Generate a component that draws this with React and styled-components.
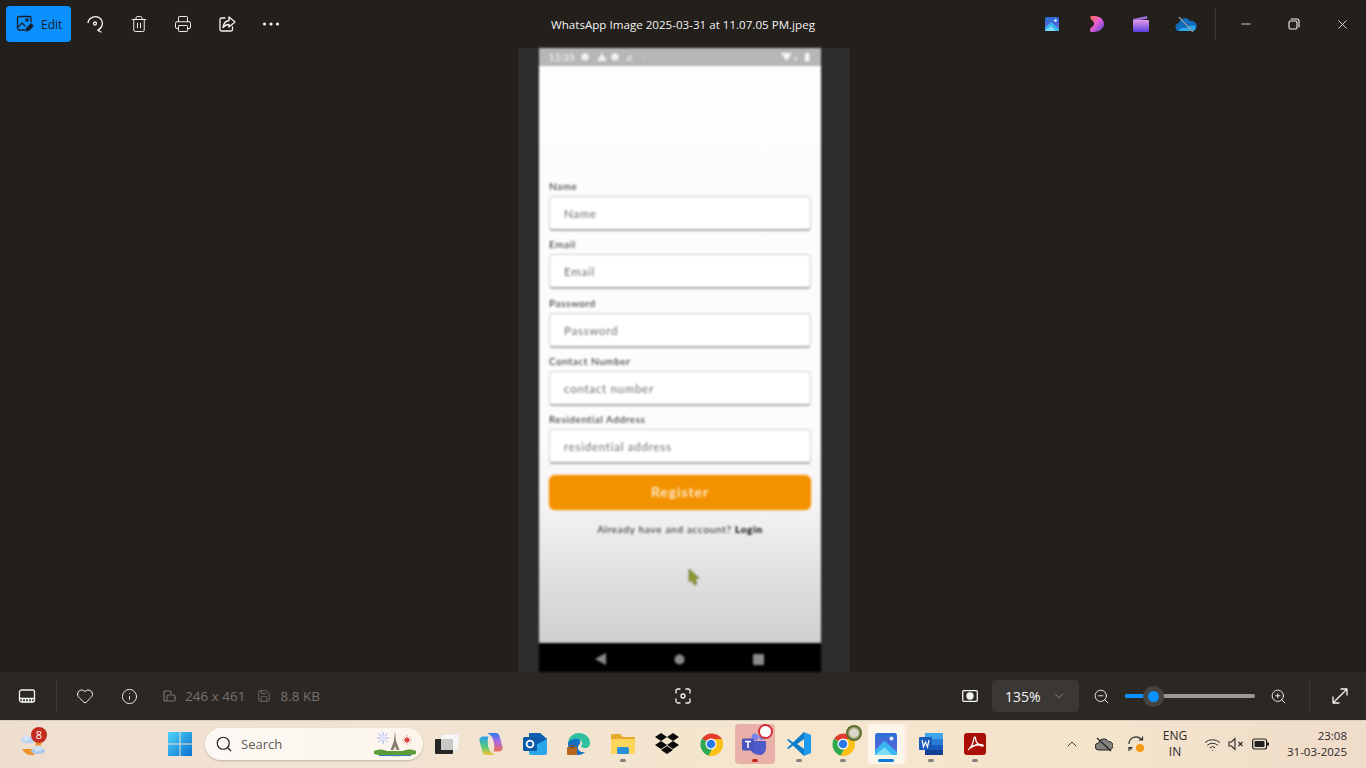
import React from 'react';
import styled, { createGlobalStyle } from 'styled-components';
import { Minus, X, Heart, Info, ZoomIn, ZoomOut, Search, ChevronUp, ChevronDown, Printer, Trash2, Save, Wifi } from 'lucide-react';

const Global = createGlobalStyle`
  html, body { margin: 0; padding: 0; background: #231f1a; }
  body { font-family: "Open Sans", "Noto Sans", sans-serif; overflow: hidden; }
  * { box-sizing: border-box; }
`;

const Page = styled.div`
  width: 1366px;
  height: 768px;
  display: flex;
  flex-direction: column;
  overflow: hidden;
`;

const TopBar = styled.header`
  height: 48px;
  background: #231f1a;
  display: grid;
  grid-template-columns: 1fr auto 1fr;
  align-items: center;
  color: #fff;
`;
const Group = styled.div`
  display: flex;
  align-items: center;
  justify-content: ${p => p.$end ? 'flex-end' : 'flex-start'};
`;
const EditButton = styled.div`
  width: 65px;
  height: 36px;
  border-radius: 4px;
  background: #0a91ff;
  color: #14202c;
  display: flex;
  align-items: center;
  gap: 7px;
  padding-left: 10px;
  font-size: 12px;
  margin: 0 2px 0 6px;
`;
const ToolBtn = styled.div`
  width: ${p => p.$w || 44}px;
  height: 36px;
  margin-left: ${p => p.$ml || 0}px;
  margin-right: ${p => p.$mr || 0}px;
  display: flex;
  align-items: center;
  justify-content: center;
  color: #f4f4f4;
`;
const Title = styled.div`
  font-size: 11.6px;
  color: #f2f2f2;
  white-space: nowrap;
`;
const AppIcon = styled.div`
  width: 44.5px;
  display: flex;
  justify-content: center;
`;
const VRule = styled.div`
  width: 1px;
  height: 32px;
  background: #3b3833;
  margin: ${p => p.$m || '0'};
`;
const WinBtn = styled.div`
  width: 48px;
  height: 32px;
  display: flex;
  align-items: center;
  justify-content: center;
  color: #f6f6f6;
`;

const Stage = styled.main`
  height: 624px;
  background: #231f1a;
  display: flex;
  justify-content: center;
  padding-left: 2px;
`;
const Shot = styled.div`
  width: 332px;
  height: 624px;
  background: #2b2c2e;
  padding-left: 21px;
`;
const Phone = styled.div`
  width: 282px;
  height: 624px;
  display: flex;
  flex-direction: column;
  position: relative;
  filter: blur(0.85px);
  font-family: Lato, "Open Sans", sans-serif;
`;
const StatusBar = styled.div`
  height: 18px;
  background: #b7b5b7;
  color: #f1f1f1;
  display: flex;
  align-items: center;
  padding: 0 10px 0 10px;
  gap: 8px;
  font-size: 9.5px;
  font-weight: 700;
`;
const ClockText = styled.span`
  margin-right: -3px;
  letter-spacing: 0.3px;
`;
const Spacer = styled.div`
  flex: 1;
`;
const Screen = styled.div`
  flex: 1;
  padding: 114px 10px 0;
  background: linear-gradient(180deg, #fefcfe 0%, #fdfbfe 62%, #f5f4f5 76%, #dfdedf 90%, #d0cfd1 100%);
  display: flex;
  flex-direction: column;
`;
const Field = styled.div`
  height: 58.25px;
`;
const Label = styled.div`
  height: 16px;
  line-height: 13px;
  font-size: 10px;
  letter-spacing: 0.6px;
  color: #1e1e20;
`;
const Input = styled.div`
  height: 35px;
  background: #fff;
  border: 1.5px solid #cfced1;
  border-bottom: 2px solid #acabae;
  border-radius: 4px;
  padding-left: 14px;
  line-height: 34px;
  font-size: 11.5px;
  letter-spacing: 0.75px;
  color: #6f6e72;
`;
const RegisterBtn = styled.div`
  margin-top: 4px;
  height: 35px;
  border-radius: 6px;
  background: #f39200;
  color: #fde9c6;
  font-size: 14px;
  font-weight: 700;
  letter-spacing: 0.9px;
  text-align: center;
  line-height: 33px;
  box-shadow: 0 0 2px #f8c77a;
`;
const LoginLine = styled.div`
  margin-top: 13px;
  text-align: center;
  font-size: 10px;
  letter-spacing: 0.7px;
  color: #252528;
  b { color: #0c0c10; font-weight: 900; }
`;
const Pointer = styled.svg`
  position: absolute;
  left: 149px;
  top: 521px;
`;
const NavBar = styled.div`
  height: 29px;
  background: #000;
  display: flex;
  align-items: center;
  justify-content: center;
  gap: 68px;
  padding: 3px 1px 0 0;
`;

const BottomBar = styled.div`
  height: 48px;
  background: #2b2824;
  display: grid;
  grid-template-columns: 1fr auto 1fr;
  align-items: center;
  color: #f4f4f4;
`;
const Meta = styled.div`
  display: flex;
  align-items: center;
  gap: 9px;
  color: #76736e;
  font-size: 13.5px;
  margin-left: ${p => p.$ml || 0}px;
`;
const ZoomBox = styled.div`
  width: 87px;
  height: 32px;
  background: #3a3734;
  border-radius: 4px;
  display: flex;
  align-items: center;
  justify-content: space-between;
  padding: 0 13px 0 13px;
  font-size: 14px;
  color: #f4f4f4;
`;
const Track = styled.div`
  width: 130px;
  height: 4px;
  border-radius: 2px;
  background: #9a9894;
  position: relative;
`;
const Fill = styled.div`
  height: 4px;
  width: 28px;
  border-radius: 2px;
  background: #0a91ff;
`;
const Thumb = styled.div`
  position: absolute;
  left: 17.5px;
  top: -8.5px;
  width: 21px;
  height: 21px;
  border-radius: 50%;
  background: #0a91ff;
  border: 5px solid #45423f;
`;

const Taskbar = styled.footer`
  height: 48px;
  background: linear-gradient(90deg, #efdfd0 0%, #f2e3d2 30%, #f5e6cd 60%, #f5e4cc 80%, #efdcc9 100%);
  box-shadow: inset 0 1px 0 #d8cec1;
  display: flex;
  align-items: center;
`;
const Weather = styled.div`
  width: 158px;
  height: 47px;
  padding-left: 20px;
  display: flex;
  align-items: center;
  position: relative;
`;
const Badge = styled.div`
  position: absolute;
  left: 31px;
  top: 6px;
  width: 16px;
  height: 16px;
  border-radius: 50%;
  background: #c42b1c;
  color: #fff;
  font-size: 11px;
  text-align: center;
  line-height: 16px;
`;
const Tile = styled.div`
  width: ${p => p.$w || 44}px;
  height: 40px;
  margin-left: ${p => p.$ml || 0}px;
  margin-right: ${p => p.$mr || 0}px;
  display: flex;
  align-items: center;
  justify-content: center;
  position: relative;
  border-radius: 4px;
  background: ${p => p.$bg || 'transparent'};
`;
const Dot = styled.div`
  position: absolute;
  bottom: 2px;
  left: 50%;
  width: ${p => p.$w || 6}px;
  height: 3px;
  border-radius: 2px;
  transform: translateX(-50%);
  background: ${p => p.$c || '#85827d'};
`;
const SearchBox = styled.div`
  width: 218px;
  height: 32px;
  margin-left: 3px;
  margin-right: 2px;
  border-radius: 16px;
  background: linear-gradient(90deg, #fdf8f3, #fbf5ec);
  box-shadow: 0 1px 2px #bdb2a4;
  display: flex;
  align-items: center;
  padding: 0 7px 0 10px;
  gap: 8px;
  font-size: 13px;
  color: #5d5a56;
`;
const Tray = styled.div`
  margin-left: auto;
  display: flex;
  align-items: center;
  color: #2a2a2a;
  padding-right: 19px;
`;
const TrayIcon = styled.div`
  width: ${p => p.$w || 32}px;
  display: flex;
  justify-content: center;
`;
const Lang = styled.div`
  width: 46px;
  text-align: center;
  font-size: 12px;
  line-height: 16px;
  color: #2a2a2a;
  margin-right: 4px;
`;
const Clock = styled.div`
  margin-left: 13px;
  text-align: right;
  font-size: 11.5px;
  line-height: 16px;
  color: #2a2a2a;
`;
const RecDot = styled.div`
  position: absolute;
  top: 0;
  right: 2px;
  width: 15px;
  height: 15px;
  border-radius: 50%;
  background: #fff;
  border: 2px solid #d6303c;
`;
const ProfileDot = styled.div`
  position: absolute;
  top: 1px;
  right: 3px;
  width: 16px;
  height: 16px;
  border-radius: 50%;
  background: radial-gradient(circle at 50% 50%, #d8d6c8 0 35%, #5c6a28 60%);
`;

const s = { fill: 'none', stroke: 'currentColor', strokeWidth: 1.3, strokeLinecap: 'round', strokeLinejoin: 'round' };

const EditIcon = () => (
  <svg width="18" height="18" viewBox="0 0 18 18" {...s}>
    <path d="M9 15H3a1.500 1.500 0 0 1-1.500-1.500V3A1.500 1.500 0 0 1 3 1.500h10.500A1.500 1.500 0 0 1 15 3v4" />
    <path d="M2 12l4-4 3 3" /><circle cx="11" cy="5" r="1.200" />
    <path d="M10 16l1-3 4-4 2 2-4 4z" fill="currentColor" />
  </svg>
);
const RotateIcon = () => (
  <svg width="18" height="18" viewBox="0 0 18 18" {...s}>
    <path d="M2 7.500A7.500 7.500 0 0 1 15.500 5c2 3.500.5 8-3.500 10" /><path d="M15 12.500L12 15.500l3 1.500" />
    <circle cx="9" cy="8.500" r="1.500" />
  </svg>
);
const ShareIcon = () => (
  <svg width="18" height="18" viewBox="0 0 18 18" {...s}>
    <path d="M7 3H3.500A1.500 1.500 0 0 0 2 4.500v10A1.500 1.500 0 0 0 3.500 16h9.500a1.500 1.500 0 0 0 1.500-1.500V12" />
    <path d="M11 2l6 5-6 5V9.500c-3 0-4.500 1-6 3 .5-4 2.500-6.500 6-7z" />
  </svg>
);
const MoreIcon = () => (
  <svg width="18" height="4" viewBox="0 0 18 4" fill="currentColor">
    <circle cx="2.500" cy="2" r="1.600" /><circle cx="9" cy="2" r="1.600" /><circle cx="15.500" cy="2" r="1.600" />
  </svg>
);
const PhotosIcon = ({ size = 14 }) => (
  <svg width={size} height={size} viewBox="0 0 14 14">
    <defs><linearGradient id="ph" x1="0" y1="0" x2="0" y2="1"><stop offset="0" stopColor="#2a6fd6" /><stop offset="1" stopColor="#6a5fd8" /></linearGradient></defs>
    <rect width="14" height="14" rx="1.500" fill="url(#ph)" />
    <circle cx="10.500" cy="3.500" r="1.300" fill="#e8f0ff" />
    <path d="M0 11l6-6 8 7v2H0z" fill="#38b6f0" /><path d="M0 14l6-5 5 5z" fill="#7fdcf8" />
  </svg>
);
const ClipIcon = () => (
  <svg width="16" height="16" viewBox="0 0 16 16">
    <defs><linearGradient id="cl" x1="0" y1="0" x2="1" y2="1"><stop offset="0" stopColor="#ff6a4a" /><stop offset=".45" stopColor="#e85fd0" /><stop offset="1" stopColor="#4a3fd8" /></linearGradient></defs>
    <path d="M2 0c8-1 13 3 13 8s-6 9-13 8c-2-1-1-4 2-6 2-2 1-4-1-6C1 3 1 1 2 0z" fill="url(#cl)" />
  </svg>
);
const ClapIcon = () => (
  <svg width="16" height="16" viewBox="0 0 16 16">
    <defs><linearGradient id="cp" x1="0" y1="0" x2="0" y2="1"><stop offset="0" stopColor="#e49ae8" /><stop offset="1" stopColor="#5a3de0" /></linearGradient></defs>
    <path d="M0 3l14-3 .5 2.500L0 5.500z" fill="#9b6fd8" /><rect y="4" width="16" height="12" rx="1" fill="url(#cp)" />
  </svg>
);
const CloudOff = () => (
  <svg width="22" height="16" viewBox="0 0 22 16">
    <path d="M5 15a4 4 0 0 1-1-8 6 6 0 0 1 11-2 4.500 4.500 0 0 1 3 10z" fill="#0f6cbd" />
    <path d="M3 15h15a3 3 0 0 0 2-5c-3-1-6 0-9 2-3-1-6 0-8 3z" fill="#29a8ea" />
    <path d="M4 1l14 15" stroke="#9a9a9a" strokeWidth="1.200" />
  </svg>
);
const RestoreIcon = () => (
  <svg width="12" height="12" viewBox="0 0 12 12" {...s} strokeWidth="1.100">
    <rect x="1" y="3" width="8" height="8" rx="1.500" /><path d="M3 1h6a2 2 0 0 1 2 2v6" />
  </svg>
);
const FilmstripIcon = () => (
  <svg width="18" height="14" viewBox="0 0 18 14" {...s}>
    <rect x="1.500" y="1" width="15" height="12" rx="2" /><path d="M1.500 9.500h15M4.500 9.500V13M7.500 9.500V13M10.500 9.500V13M13.500 9.500V13" />
  </svg>
);
const SizeIcon = () => (
  <svg width="14" height="14" viewBox="0 0 14 14" fill="none" stroke="currentColor" strokeWidth="1.200">
    <path d="M2 12V3a1 1 0 0 1 1-1h5a1 1 0 0 1 1 1v2" /><rect x="5" y="6" width="8" height="6" rx="1.500" /><path d="M2 12h3" />
  </svg>
);
const FocusIcon = () => (
  <svg width="16" height="16" viewBox="0 0 16 16" {...s}>
    <path d="M1 5V3a2 2 0 0 1 2-2h2M11 1h2a2 2 0 0 1 2 2v2M15 11v2a2 2 0 0 1-2 2h-2M5 15H3a2 2 0 0 1-2-2v-2" /><circle cx="8" cy="8" r="2" />
  </svg>
);
const ActualSizeIcon = () => (
  <svg width="16" height="12" viewBox="0 0 16 12" {...s}>
    <rect x=".7" y=".7" width="14.600" height="10.600" rx="1" /><circle cx="8" cy="6" r="3" fill="currentColor" />
  </svg>
);
const ExpandIcon = () => (
  <svg width="16" height="16" viewBox="0 0 16 16" {...s}>
    <path d="M9 1h6v6M15 1L1 15M1 9v6h6" />
  </svg>
);
const WeatherIcon = () => (
  <svg width="26" height="26" viewBox="0 0 26 26">
    <path d="M2 18h14l-2 6c-5 1-9-1-12-6zM16 11l6 1-3 5h-4z" fill="#f0922a" />
    <ellipse cx="8" cy="9" rx="7" ry="3.500" fill="#b9d3f2" /><ellipse cx="6" cy="7" rx="3" ry="3" fill="#d3e3f6" />
    <ellipse cx="18" cy="20" rx="7" ry="3" fill="#a9c8f0" /><ellipse cx="18" cy="17.500" rx="4" ry="3" fill="#cfe2f8" />
  </svg>
);
const StartIcon = () => (
  <svg width="24" height="24" viewBox="0 0 24 24">
    <defs><linearGradient id="st" x1="0" y1="0" x2="1" y2="1"><stop offset="0" stopColor="#4fd4f8" /><stop offset="1" stopColor="#0a6fd0" /></linearGradient></defs>
    <path d="M0 0h11.500v11.500H0zM12.500 0H24v11.500H12.500zM0 12.500h11.500V24H0zM12.500 12.500H24V24H12.500z" fill="url(#st)" />
  </svg>
);
const EiffelIcon = () => (
  <svg width="42" height="26" viewBox="0 0 42 26">
    <g stroke="#9fb2f0" strokeWidth="1"><path d="M9 1v12M3 7h12M4.500 2.500l9 9M13.500 2.500l-9 9" /></g>
    <circle cx="9" cy="7" r="2.500" fill="#dfe6fb" />
    <g stroke="#f0a09a" strokeWidth="1"><path d="M33 4v10M28 9h10M29.500 5.500l7 7M36.500 5.500l-7 7" /></g>
    <circle cx="33" cy="9" r="2.400" fill="#d8403c" />
    <path d="M21 0l1 10 3.500 9h-3l-1.500-4-1.500 4h-3l3.500-9z" fill="#8a7a68" />
    <path d="M0 20c5-2 9-2 13 0h16c4-2 9-2 13 0v3c-12 3-30 3-42 0z" fill="#5c9a3a" />
    <path d="M5 24h32v1H5z" fill="#3a7ac0" />
  </svg>
);
const TaskViewIcon = () => (
  <svg width="24" height="24" viewBox="0 0 24 24">
    <rect x="6" y="2" width="18" height="16" rx="1" fill="#f7f6f4" stroke="#e2e0dc" />
    <rect y="7" width="18" height="15" rx="1" fill="#262626" /><rect x="6" y="7" width="12" height="11" fill="#c9c9c7" />
  </svg>
);
const CopilotIcon = () => (
  <svg width="24" height="24" viewBox="0 0 24 24">
    <defs>
      <linearGradient id="c1" x1="0" y1="0" x2="0" y2="1"><stop offset="0" stopColor="#28a0ee" /><stop offset=".55" stopColor="#58c87c" /><stop offset="1" stopColor="#f4c430" /></linearGradient>
      <linearGradient id="c2" x1="0" y1="0" x2="0" y2="1"><stop offset="0" stopColor="#2a7fe8" /><stop offset=".45" stopColor="#a868e8" /><stop offset="1" stopColor="#f07050" /></linearGradient>
    </defs>
    <path d="M8 1h9c2 0 3 1 3.500 3l3 11c.5 3-1.500 4.500-4 4.500h-5c2-5 0-14-3-16-1-1-2-2-3.500-2.500z" fill="url(#c2)" />
    <path d="M16 23H7c-2 0-3-1-3.500-3l-3-11C0 6 2 4.500 4.500 4.500h5c-2 5 0 14 3 16 1 1 2 2 3.500 2.500z" fill="url(#c1)" />
  </svg>
);
const OutlookIcon = () => (
  <svg width="24" height="24" viewBox="0 0 24 24">
    <path d="M6 1h11l7 6v14a2 2 0 0 1-2 2H8a2 2 0 0 1-2-2z" fill="#28a8ea" /><path d="M6 1h11l7 6-9 5-9-5z" fill="#0f5fb0" />
    <rect y="5" width="14" height="14" rx="1.500" fill="#0a5aa8" />
    <circle cx="7" cy="12" r="3.400" fill="none" stroke="#fff" strokeWidth="1.800" />
  </svg>
);
const EdgeIcon = () => (
  <svg width="24" height="24" viewBox="0 0 24 24">
    <path d="M1 12C1 5 6 1 12 1c6 0 11 4 11 10 0 3-2 5-5 5-2 0-4-1-4-2 2-1 2-5-2-6-5-1-10 2-11 4z" fill="#2fc0a0" />
    <path d="M1 12c0-3 5-6 10-5 3 1 3 4 1 6-3 3 0 8 6 7-2 2-4 3-7 3C5 23 1 18 1 12z" fill="#1470c4" />
    <rect x="0" y="15" width="10" height="8" rx="1" fill="#b5651d" /><rect x="3" y="13.500" width="4" height="2" fill="none" stroke="#8a4a10" />
  </svg>
);
const FolderIcon = () => (
  <svg width="24" height="24" viewBox="0 0 24 24">
    <path d="M0 3a1 1 0 0 1 1-1h8l3 3h11a1 1 0 0 1 1 1v15a1 1 0 0 1-1 1H1a1 1 0 0 1-1-1z" fill="#e6a92c" />
    <path d="M0 7h24v14a1 1 0 0 1-1 1H1a1 1 0 0 1-1-1z" fill="#fbd65a" />
    <rect x="6" y="15" width="12" height="7" rx="1.500" fill="#2a8fd8" />
  </svg>
);
const DropboxIcon = () => (
  <svg width="24" height="22" viewBox="0 0 24 22" fill="#0b0b0b">
    <path d="M6 0l6 4-6 4-6-4zM18 0l6 4-6 4-6-4zM6 8l6 4-6 4-6-4zM18 8l6 4-6 4-6-4zM12 13l6 4-6 4-6-4z" />
  </svg>
);
const ChromeIcon = () => (
  <svg width="24" height="24" viewBox="0 0 24 24">
    <path d="M12 12L3 6.500A12 12 0 0 1 23 7H12z" fill="#e33b2e" />
    <path d="M12 12L3 6.500A12 12 0 0 0 9.500 23.700L14 16z" fill="#2fa84f" />
    <path d="M12 12l2 4-4.500 7.700A12 12 0 0 0 23 7H12z" fill="#fbc116" />
    <circle cx="12" cy="12" r="5.500" fill="#fff" /><circle cx="12" cy="12" r="4.300" fill="#2a78e4" />
  </svg>
);
const TeamsIcon = () => (
  <svg width="26" height="24" viewBox="0 0 26 24">
    <circle cx="20" cy="5" r="3" fill="#7b83eb" /><circle cx="13" cy="5" r="3.500" fill="#7b83eb" />
    <path d="M8 9h16v7c0 4-3 7-6 7-5 0-10-3-10-8z" fill="#5059c9" />
    <rect y="6.500" width="12" height="12" rx="1.500" fill="#4b53bc" />
    <path d="M3 9.500h6M6 9.500V16" stroke="#fff" strokeWidth="1.600" />
  </svg>
);
const VSCodeIcon = () => (
  <svg width="24" height="24" viewBox="0 0 24 24">
    <path d="M17 0l7 3v18l-7 3z" fill="#1f9cf0" /><path d="M17 0L6 10.500 1.500 7 0 8l4.500 4L0 16l1.500 1L6 13.500 17 24V17L10 12l7-5z" fill="#0a7ccc" />
  </svg>
);
const WordIcon = () => (
  <svg width="24" height="24" viewBox="0 0 24 24">
    <path d="M6 1h18v6H6z" fill="#41a5ee" /><path d="M6 7h18v6H6z" fill="#2b7cd3" /><path d="M6 13h18v5H6z" fill="#185abd" /><path d="M6 18h18v5H6z" fill="#103f91" />
    <rect y="5" width="13" height="13" rx="1" fill="#1a5cbc" />
    <path d="M3 8l1.500 7L6.500 10l2 5L10 8" fill="none" stroke="#fff" strokeWidth="1.200" />
  </svg>
);
const AcrobatIcon = () => (
  <svg width="22" height="22" viewBox="0 0 22 22">
    <rect width="22" height="22" rx="3" fill="#a90f06" />
    <path d="M4 17c3-2 5-6 6-12 .5-1.500 1.500-1 1.500 0 0 4 3 8 7 8 1 0 1-1 0-1.200-4-.8-9 .5-13 3.500" fill="none" stroke="#fff" strokeWidth="1.300" />
  </svg>
);
const TileActive = styled(Tile)`
  background: #fbf5ea;
  box-shadow: 2px 0 0 #f8efe0;
`;
const SyncIcon = () => (
  <svg width="18" height="18" viewBox="0 0 18 18" fill="none" stroke="#2a2a2a" strokeWidth="1.200">
    <path d="M2 9a7 7 0 0 1 12-5l1.500 1M15.500 1.500V5H12M3 13l1.500 1.500" /><path d="M2 16v-3.500h3.500" />
    <circle cx="13" cy="13" r="4" fill="#f59a14" stroke="none" />
  </svg>
);
const MuteIcon = () => (
  <svg width="16" height="14" viewBox="0 0 16 14" fill="none" stroke="#2a2a2a" strokeWidth="1.100">
    <path d="M1 5v4h2.500L7 12.500v-11L3.500 5z" /><path d="M10.500 5l4 4M14.500 5l-4 4" />
  </svg>
);
const BatteryIcon = () => (
  <svg width="17" height="12" viewBox="0 0 17 12">
    <rect x=".6" y="1" width="14" height="10" rx="2" fill="none" stroke="#222" strokeWidth="1.200" />
    <rect x="2.500" y="3" width="10" height="6" rx=".8" fill="#222" /><rect x="15" y="4.500" width="2" height="3" fill="#222" />
  </svg>
);
const TrayCloud = () => (
  <svg width="18" height="15" viewBox="0 0 18 15">
    <path d="M4 13a3.500 3.500 0 0 1-.5-7 5.500 5.500 0 0 1 10-1.500A4 4 0 0 1 14 13z" fill="#85827f" stroke="#222" strokeWidth="1" />
    <path d="M2 1l14 13" stroke="#222" strokeWidth="1.200" />
  </svg>
);
const StatusIcons = () => (
  <svg width="76" height="12" viewBox="0 0 76 12" fill="#f1f1f1">
    <circle cx="5" cy="6" r="3.800" /><path d="M22 2l5 8H17z" /><circle cx="35" cy="6" r="3.800" />
    <path d="M46 9h7M47 9l5-5" stroke="#f1f1f1" strokeWidth="1.200" fill="none" /><circle cx="65" cy="6" r=".8" />
  </svg>
);
const StatusRight = () => (
  <svg width="34" height="12" viewBox="0 0 34 12" fill="#f8f8f8">
    <path d="M4 2h11L9.500 10z" /><path d="M16 9l4-4v4z" fill="#e4e4e4" /><rect x="28" y="2" width="4.500" height="8.500" rx=".8" />
  </svg>
);

const fields = [
  ['Name', 'Name'],
  ['Email', 'Email'],
  ['Password', 'Password'],
  ['Contact Number', 'contact number'],
  ['Residential Address', 'residential address'],
];

export default function App() {
  return (
    <Page>
      <Global />
      <TopBar>
        <Group>
          <EditButton><EditIcon />Edit</EditButton>
          <ToolBtn><RotateIcon /></ToolBtn>
          <ToolBtn><Trash2 size={18} strokeWidth={1.3} /></ToolBtn>
          <ToolBtn><Printer size={18} strokeWidth={1.3} /></ToolBtn>
          <ToolBtn><ShareIcon /></ToolBtn>
          <ToolBtn><MoreIcon /></ToolBtn>
        </Group>
        <Title>WhatsApp Image 2025-03-31 at 11.07.05 PM.jpeg</Title>
        <Group $end>
          <AppIcon><PhotosIcon /></AppIcon>
          <AppIcon><ClipIcon /></AppIcon>
          <AppIcon><ClapIcon /></AppIcon>
          <AppIcon><CloudOff /></AppIcon>
          <VRule $m="0 6px 0 7px" />
          <WinBtn><Minus size={14} strokeWidth={1.4} /></WinBtn>
          <WinBtn><RestoreIcon /></WinBtn>
          <WinBtn><X size={15} strokeWidth={1.3} /></WinBtn>
        </Group>
      </TopBar>

      <Stage>
        <Shot>
          <Phone>
            <StatusBar>
              <ClockText>12:35</ClockText>
              <StatusIcons />
              <Spacer />
              <StatusRight />
            </StatusBar>
            <Screen>
              {fields.map(([label, hint]) => (
                <Field key={label}>
                  <Label>{label}</Label>
                  <Input>{hint}</Input>
                </Field>
              ))}
              <RegisterBtn>Register</RegisterBtn>
              <LoginLine>Already have and account? <b>Login</b></LoginLine>
            </Screen>
            <Pointer width="12" height="16" viewBox="0 0 12 16">
              <path d="M1 0l10 9-4 1 2 5-3 1-2-5-3 2z" fill="#8c9a2c" stroke="#55552f" strokeWidth=".6" />
            </Pointer>
            <NavBar>
              <svg width="11" height="12" viewBox="0 0 11 12" fill="#8a8a8a"><path d="M11 0v12L0 6z" /></svg>
              <svg width="11" height="11" viewBox="0 0 11 11" fill="#8a8a8a"><circle cx="5.500" cy="5.500" r="5" /></svg>
              <svg width="11" height="11" viewBox="0 0 11 11" fill="#8a8a8a"><rect width="11" height="11" rx="1" /></svg>
            </NavBar>
          </Phone>
        </Shot>
      </Stage>

      <BottomBar>
        <Group>
          <ToolBtn $w={54}><FilmstripIcon /></ToolBtn>
          <VRule $m="0 6px 0 2px" />
          <ToolBtn><Heart size={18} strokeWidth={1.3} /></ToolBtn>
          <ToolBtn><Info size={17} strokeWidth={1.3} /></ToolBtn>
          <Meta $ml={11}><SizeIcon />246 x 461</Meta>
          <Meta $ml={12}><Save size={14} strokeWidth={1.4} />8.8 KB</Meta>
        </Group>
        <ToolBtn><FocusIcon /></ToolBtn>
        <Group $end>
          <ToolBtn><ActualSizeIcon /></ToolBtn>
          <ZoomBox>135%<ChevronDown size={14} strokeWidth={1.2} color="#aaa" /></ZoomBox>
          <ToolBtn $mr={2}><ZoomOut size={17} strokeWidth={1.3} /></ToolBtn>
          <Track><Fill /><Thumb /></Track>
          <ToolBtn $ml={1}><ZoomIn size={17} strokeWidth={1.3} /></ToolBtn>
          <VRule $m="0 8px 0 9px" />
          <ToolBtn $mr={4}><ExpandIcon /></ToolBtn>
        </Group>
      </BottomBar>

      <Taskbar>
        <Weather><WeatherIcon /><Badge>8</Badge></Weather>
        <Tile><StartIcon /></Tile>
        <SearchBox>
          <Search size={18} strokeWidth={1.6} color="#222" />
          Search
          <Spacer />
          <EiffelIcon />
        </SearchBox>
        <Tile><TaskViewIcon /></Tile>
        <Tile><CopilotIcon /></Tile>
        <Tile><OutlookIcon /></Tile>
        <Tile><EdgeIcon /></Tile>
        <Tile><FolderIcon /><Dot /></Tile>
        <Tile><DropboxIcon /></Tile>
        <Tile><ChromeIcon /></Tile>
        <Tile $w={40} $ml={2} $mr={2} $bg="#e8b0a8"><TeamsIcon /><RecDot /><Dot $c="#c42b1c" /></Tile>
        <Tile><VSCodeIcon /><Dot /></Tile>
        <Tile><ChromeIcon /><ProfileDot /><Dot /></Tile>
        <TileActive $w={36} $ml={3} $mr={5}><PhotosIcon size={22} /><Dot $w={16} $c="#0a78d4" /></TileActive>
        <Tile><WordIcon /><Dot /></Tile>
        <Tile><AcrobatIcon /><Dot /></Tile>
        <Tray>
          <TrayIcon><ChevronUp size={16} strokeWidth={1.4} /></TrayIcon>
          <TrayIcon><TrayCloud /></TrayIcon>
          <TrayIcon><SyncIcon /></TrayIcon>
          <Lang>ENG<br />IN</Lang>
          <TrayIcon $w={22}><Wifi size={17} strokeWidth={1.4} /></TrayIcon>
          <TrayIcon $w={24}><MuteIcon /></TrayIcon>
          <TrayIcon $w={26}><BatteryIcon /></TrayIcon>
          <Clock>23:08<br />31-03-2025</Clock>
        </Tray>
      </Taskbar>
    </Page>
  );
}
